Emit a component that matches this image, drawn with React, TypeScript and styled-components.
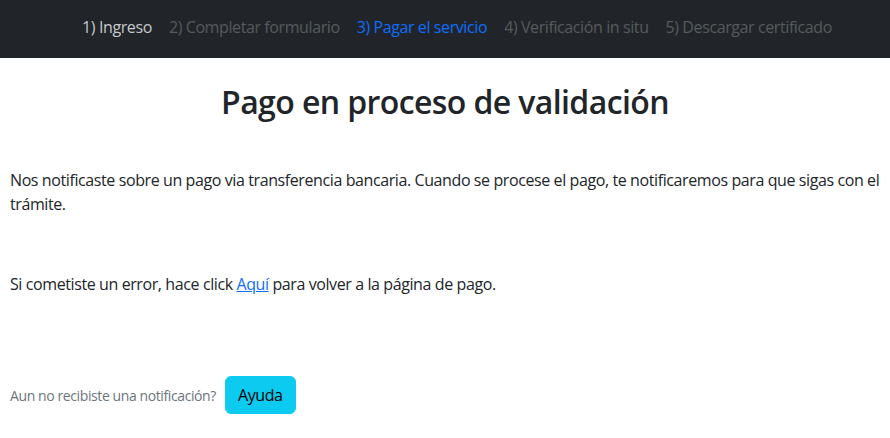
import React from "react";
import styled, { createGlobalStyle } from "styled-components";

const Global = createGlobalStyle`
  * { box-sizing: border-box; }
  html, body { margin: 0; padding: 0; background: #fff; }
  body {
    font-family: "Open Sans", "Noto Sans", "Liberation Sans", sans-serif;
    font-size: 16px;
    line-height: 1.5;
    letter-spacing: -0.4px;
    color: #212529;
  }
`;

const NavBar = styled.nav`
  height: 58px;
  background: #212529;
  display: flex;
  align-items: center;
  justify-content: center;
  padding: 0 0 5px 24px;
`;

const NavList = styled.ul`
  list-style: none;
  margin: 0;
  padding: 0;
  display: flex;
  gap: 17px;
`;

type Tone = "done" | "todo" | "active";
const NavItem = styled.li<{ $tone: Tone }>`
  font-size: 16px;
  color: ${(p) =>
    p.$tone === "active" ? "#0d6efd" : p.$tone === "done" ? "rgba(255,255,255,0.75)" : "rgba(255,255,255,0.25)"};
`;

const Main = styled.main`
  padding: 0 10px;
`;

const Title = styled.h2`
  margin: 25px 0 0;
  text-align: center;
  font-size: 32px;
  font-weight: 600;
  line-height: 1.2;
  letter-spacing: -0.6px;
`;

const Para = styled.p<{ $top: number }>`
  margin: ${(p) => p.$top}px 0 0;
`;

const Link = styled.a`
  color: #0d6efd;
  text-decoration: underline;
`;

const HelpRow = styled.div`
  margin-top: 80px;
  display: flex;
  align-items: center;
  gap: 9px;
`;

const Muted = styled.small`
  font-size: 14px;
  color: #6c757d;
`;

const HelpButton = styled.button`
  font-family: inherit;
  font-size: 16px;
  line-height: 1.5;
  letter-spacing: -0.4px;
  padding: 6px 12px;
  border: 1px solid #0dcaf0;
  border-radius: 6px;
  background: #0dcaf0;
  color: #000;
`;

const steps: { label: string; tone: Tone }[] = [
  { label: "1) Ingreso", tone: "done" },
  { label: "2) Completar formulario", tone: "todo" },
  { label: "3) Pagar el servicio", tone: "active" },
  { label: "4) Verificación in situ", tone: "todo" },
  { label: "5) Descargar certificado", tone: "todo" },
];

export default function App() {
  return (
    <>
      <Global />
      <NavBar>
        <NavList>
          {steps.map((s) => (
            <NavItem key={s.label} $tone={s.tone}>
              {s.label}
            </NavItem>
          ))}
        </NavList>
      </NavBar>
      <Main>
        <Title>Pago en proceso de validación</Title>
        <Para $top={47}>
          Nos notificaste sobre un pago via transferencia bancaria. Cuando se procese el pago, te notificaremos para que
          sigas con el trámite.
        </Para>
        <Para $top={56}>
          Si cometiste un error, hace click <Link href="#">Aquí</Link> para volver a la página de pago.
        </Para>
        <HelpRow>
          <Muted>Aun no recibiste una notificación?</Muted>
          <HelpButton>Ayuda</HelpButton>
        </HelpRow>
      </Main>
    </>
  );
}
